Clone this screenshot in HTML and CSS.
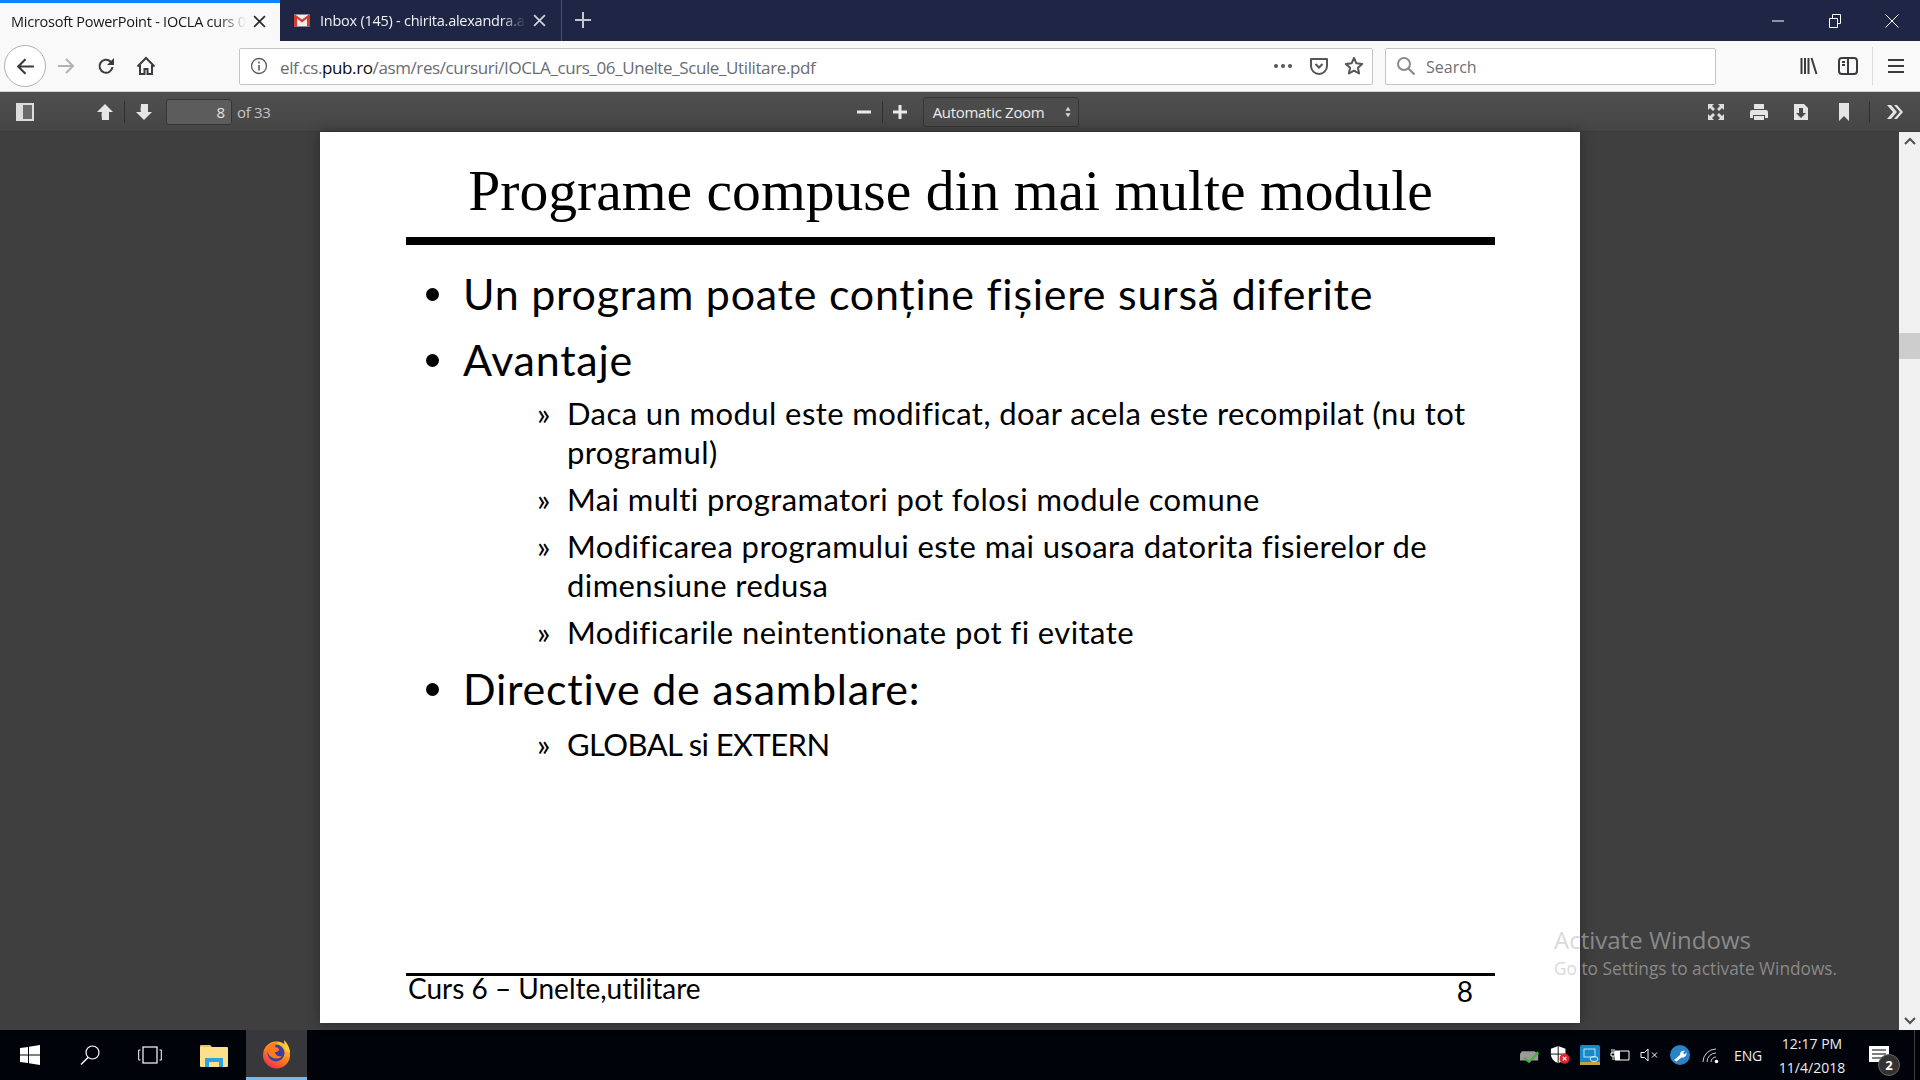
FILE: index.html
```html
<!DOCTYPE html>
<html lang="en">
<head>
    <meta charset="UTF-8">
    <title>IOCLA curs 06</title>
    <link rel="stylesheet" href="styles.css">
</head>
<body>
    <div class="tabbar">
        <div class="tab tab-active">
            <span class="tab-title">Microsoft PowerPoint - IOCLA curs 0</span>
            <svg class="tab-close" viewBox="0 0 12 12"><path d="M1 1l10 10M11 1L1 11" stroke="#2b2b2b" stroke-width="1.6"/></svg>
        </div>
        <div class="tab tab-other">
            <svg class="gmail" viewBox="0 0 16 12"><rect width="16" height="12" rx="1" fill="#eeeeee"/><path d="M0 1v11h3V4l5 4 5-4v8h3V1l-1-1-7 5-7-5z" fill="#d8392e"/></svg>
            <span class="tab-title">Inbox (145) - chirita.alexandra.a</span>
            <svg class="tab-close" viewBox="0 0 12 12"><path d="M1 1l10 10M11 1L1 11" stroke="#d0d3da" stroke-width="1.6"/></svg>
        </div>
        <svg class="new-tab" viewBox="0 0 18 18"><path d="M9 1v16M1 9h16" stroke="#c5c8d0" stroke-width="2"/></svg>
        <div class="window-btns">
            <svg viewBox="0 0 14 14"><path d="M1 7h12" stroke="#fff"/></svg>
            <svg viewBox="0 0 14 14"><path d="M1.500 4.500h8v9h-8zM4.500 4V.5h8v9H10" fill="none" stroke="#fff"/></svg>
            <svg viewBox="0 0 14 14"><path d="M.5.5l13 13M13.500.5l-13 13" stroke="#fff"/></svg>
        </div>
    </div>

    <div class="navbar">
        <div class="back-btn">
            <svg viewBox="0 0 20 20"><path d="M18 10H3M10 3l-7 7 7 7" fill="none" stroke="#3b3b3f" stroke-width="2"/></svg>
        </div>
        <svg class="nav-icon forward" viewBox="0 0 20 20"><path d="M2 10h15M10 3l7 7-7 7" fill="none" stroke="#b3b3b5" stroke-width="2"/></svg>
        <svg class="nav-icon" viewBox="0 0 20 20"><path d="M16.500 11a6.500 6.500 0 1 1-2-5.500L17 8" fill="none" stroke="#3b3b3f" stroke-width="2"/><path d="M18 2v7h-7z" fill="#3b3b3f"/></svg>
        <svg class="nav-icon" viewBox="0 0 20 20"><path d="M1.500 10.500L10 2l8.500 8.500M4 9v9h4.500v-5h3v5H16V9" fill="none" stroke="#3b3b3f" stroke-width="2"/></svg>
        <div class="urlbar">
            <svg class="info" viewBox="0 0 18 18"><circle cx="9" cy="9" r="7.500" fill="none" stroke="#5c5c60" stroke-width="1.300"/><path d="M9 8v5.500M9 4.500v2" stroke="#5c5c60" stroke-width="1.600"/></svg>
            <span class="url">elf.cs.<b>pub.ro</b>/asm/res/cursuri/IOCLA_curs_06_Unelte_Scule_Utilitare.pdf</span>
            <svg class="dots" viewBox="0 0 20 6"><circle cx="3" cy="3" r="2" fill="#55555a"/><circle cx="10" cy="3" r="2" fill="#55555a"/><circle cx="17" cy="3" r="2" fill="#55555a"/></svg>
            <svg class="url-icon" viewBox="0 0 20 20"><path d="M2 3h16v7a8 8 0 0 1-16 0z" fill="none" stroke="#55555a" stroke-width="2" stroke-linejoin="round"/><path d="M6.500 8l3.500 3.500L13.500 8" fill="none" stroke="#55555a" stroke-width="2"/></svg>
            <svg class="url-icon" viewBox="0 0 20 20"><path d="M10 2l2.400 5.300 5.800.6-4.300 3.900 1.200 5.700-5.100-2.900-5.100 2.900 1.200-5.700L1.800 7.900l5.800-.6z" fill="none" stroke="#55555a" stroke-width="2" stroke-linejoin="round"/></svg>
        </div>
        <div class="searchbar">
            <svg class="search-icon" viewBox="0 0 20 20"><circle cx="8" cy="8" r="6" fill="none" stroke="#8a8a8e" stroke-width="2"/><path d="M12.500 12.500l6 6" stroke="#8a8a8e" stroke-width="2.200"/></svg>
            <span class="search-text">Search</span>
        </div>
        <svg class="nav-icon library" viewBox="0 0 20 20"><path d="M2.500 2v16M6 2v16M9.500 2v16M12.500 2l5 16" fill="none" stroke="#3b3b3f" stroke-width="2"/></svg>
        <svg class="nav-icon sidebars" viewBox="0 0 20 20"><rect x="1" y="2" width="18" height="16" rx="3" fill="none" stroke="#3b3b3f" stroke-width="2"/><path d="M10 2v16" stroke="#3b3b3f" stroke-width="2"/><path d="M4 6h3M4 9h3" stroke="#3b3b3f" stroke-width="2"/></svg>
        <span class="nav-sep"></span>
        <svg class="nav-icon" viewBox="0 0 20 20"><path d="M2 4h16M2 10h16M2 16h16" stroke="#3b3b3f" stroke-width="2.200"/></svg>
    </div>

    <div class="pdf-toolbar">
        <svg class="tool tool-side" viewBox="0 0 18 18"><rect x="1" y="1" width="16" height="16" fill="#6a6a6a" stroke="#dcdcdc" stroke-width="2"/><rect x="2" y="2" width="5" height="14" fill="#dcdcdc"/></svg>
        <svg class="tool tool-up" viewBox="0 0 18 18"><path d="M9 1l8 8h-4v8H6c0-3-1-6 0-8H1z" fill="#e6e6e6"/></svg>
        <span class="tool-sep"></span>
        <svg class="tool tool-down" viewBox="0 0 18 18"><path d="M9 17l8-8h-4V1H6c0 3-1 6 0 8H1z" fill="#e6e6e6"/></svg>
        <div class="page-input">8</div>
        <span class="page-count">of 33</span>
        <svg class="tool tool-minus" viewBox="0 0 14 14"><path d="M0 7h14" stroke="#eaeaea" stroke-width="3"/></svg>
        <span class="tool-sep"></span>
        <svg class="tool tool-plus" viewBox="0 0 14 14"><path d="M0 7h14M7 0v14" stroke="#eaeaea" stroke-width="3"/></svg>
        <div class="zoom-select">
            <span>Automatic Zoom</span>
            <svg viewBox="0 0 8 14"><path d="M4 1l3 4.500H1zM4 13L1 8.500h6z" fill="#d8d8d8"/></svg>
        </div>
        <svg class="tool tool-full" viewBox="0 0 18 18"><path d="M1 1h6L5 3l3 3-2 2-3-3-2 2zM17 1v6l-2-2-3 3-2-2 3-3-2-2zM1 17v-6l2 2 3-3 2 2-3 3 2 2zM17 17h-6l2-2-3-3 2-2 3 3 2-2z" fill="#dedede"/></svg>
        <svg class="tool tool-print" viewBox="0 0 20 18"><path d="M5 1h10v5H5zM1 9a2 2 0 0 1 2-2h14a2 2 0 0 1 2 2v6h-3v-3H4v3H1zM5 13h10v4H5z" fill="#e4e4e4"/></svg>
        <svg class="tool tool-save" viewBox="0 0 16 18"><path d="M1 1h10l4 4v12H1z" fill="#e4e4e4"/><path d="M6 5h4v5h3l-5 5-5-5h3z" fill="#4a4a4a"/></svg>
        <svg class="tool tool-mark" viewBox="0 0 12 18"><path d="M1 0h10v18l-5-5-5 5z" fill="#e4e4e4"/></svg>
        <span class="tool-sep"></span>
        <svg class="tool tool-more" viewBox="0 0 18 16"><path d="M1 1h4l6 7-6 7H1l6-7zM8 1h3l6 7-6 7H8l6-7z" fill="#e4e4e4"/></svg>
    </div>

    <div class="viewer">
        <div class="viewer-main">
            <div class="slide">
                <h1>Programe compuse din mai multe module</h1>
                <hr class="slide-rule">
                <ul class="level-1">
                    <li>Un program poate conține fișiere sursă diferite</li>
                    <li>Avantaje
                        <ul class="level-2">
                            <li>Daca un modul este modificat, doar acela este recompilat (nu tot programul)</li>
                            <li>Mai multi programatori pot folosi module comune</li>
                            <li>Modificarea programului este mai usoara datorita fisierelor de dimensiune redusa</li>
                            <li>Modificarile neintentionate pot fi evitate</li>
                        </ul>
                    </li>
                    <li>Directive de asamblare:
                        <ul class="level-2">
                            <li class="caps-line">GLOBAL si EXTERN</li>
                        </ul>
                    </li>
                </ul>
                <div class="slide-footer">
                    <span>Curs 6 – Unelte,utilitare</span>
                    <span class="slide-num">8</span>
                </div>
            </div>
            <div class="activate">
                <div class="activate-title">Activate Windows</div>
                <div class="activate-sub">Go to Settings to activate Windows.</div>
            </div>
        </div>
        <div class="scrollbar">
            <svg viewBox="0 0 12 8"><path d="M1 7l5-5 5 5" fill="none" stroke="#505050" stroke-width="2"/></svg>
            <div class="scroll-track"><div class="scroll-thumb"></div></div>
            <svg viewBox="0 0 12 8"><path d="M1 1l5 5 5-5" fill="none" stroke="#505050" stroke-width="2"/></svg>
        </div>
    </div>

    <div class="taskbar">
        <svg class="task-win" viewBox="0 0 20 20"><path d="M0 3l8-1.100V9.500H0zM9 1.700L20 0v9.500H9zM0 10.500h8v7.600L0 17zM9 10.500h11V20L9 18.300z" fill="#fff"/></svg>
        <svg class="task-search" viewBox="0 0 20 20"><circle cx="12.500" cy="7.500" r="6.500" fill="none" stroke="#fff" stroke-width="1.200"/><path d="M8 12.500L1 19.500" stroke="#fff" stroke-width="1.400"/></svg>
        <svg class="task-view" viewBox="0 0 24 18"><rect x="5" y="1" width="14" height="16" fill="none" stroke="#fff" stroke-width="1.200"/><path d="M2.500 4H.7v10h1.800M21.500 4h1.800v10h-1.800" fill="none" stroke="#fff"/></svg>
        <svg class="task-folder" viewBox="0 0 28 23"><path d="M0 2a1 1 0 0 1 1-1h9l2 2v3H0z" fill="#e9c46a"/><rect x="0" y="3" width="28" height="20" rx="1" fill="#fde08a"/><path d="M5 23v-9h18v9h-4v-5H9v5z" fill="#2aa5e0"/></svg>
        <div class="task-firefox">
            <svg viewBox="0 0 30 30">
                <defs>
                    <linearGradient id="foxGrad" x1="0.800" y1="0" x2="0.200" y2="1">
                        <stop offset="0" stop-color="#ffd43a"/>
                        <stop offset="0.450" stop-color="#ff8a1f"/>
                        <stop offset="1" stop-color="#e8264d"/>
                    </linearGradient>
                </defs>
                <circle cx="14.500" cy="16" r="13.500" fill="url(#foxGrad)"/>
                <path d="M22 1c3 3 6 8 6 13l-5-3z" fill="#ffcf30"/>
                <circle cx="14" cy="14" r="8.500" fill="#3a3fa8"/>
                <path d="M7 6c2-2 7-3 9-2-2 1-3 2-3 4 2 0 4 1 4 3-1 2-3 2-4 2 0 3 3 5 7 4-3 4-10 3-13-1-2-3-2-7 0-10z" fill="#ff7a1c"/>
            </svg>
        </div>
        <div class="tray">
            <svg class="tray-icon" viewBox="0 0 22 18"><path d="M2 5h14l4 3v7H0V8z" fill="#9a9a9a"/><path d="M6 11l4 4 9-10 2 2-11 11-6-5z" fill="#47b13f"/></svg>
            <svg class="tray-icon" viewBox="0 0 22 20"><path d="M9 0l8 3v6c0 5-4 9-8 10-4-1-8-5-8-10V3z" fill="#fff"/><path d="M9 0v19M1 9h16" stroke="#000" stroke-width="1"/><circle cx="16" cy="14" r="5.500" fill="#e0262d"/><path d="M14 12l4 4M18 12l-4 4" stroke="#fff" stroke-width="1.300"/></svg>
            <svg class="tray-icon" viewBox="0 0 20 20"><rect width="20" height="20" rx="2" fill="#1689cc"/><rect x="4" y="4" width="11" height="8" fill="none" stroke="#bfe3f5"/><ellipse cx="14" cy="14" rx="4" ry="2.500" fill="none" stroke="#d5eef9"/><path d="M0 17h20v3H0z" fill="#c7a23a"/></svg>
            <svg class="tray-icon" viewBox="0 0 20 14"><path d="M5 3h14v9H5z" fill="none" stroke="#fff"/><rect x="5" y="3" width="5" height="9" fill="#fff"/><path d="M2 1v4M4 1v4M1 5h4v3H1zM3 8v4" stroke="#fff" fill="none"/></svg>
            <svg class="tray-icon" viewBox="0 0 20 16"><path d="M1 5.500h3.500L8 2v12l-3.500-3.500H1z" fill="none" stroke="#fff"/><path d="M12 5.500l5 5M17 5.500l-5 5" stroke="#fff"/></svg>
            <svg class="tray-icon" viewBox="0 0 20 20"><circle cx="10" cy="10" r="10" fill="#2a83c6"/><path d="M4 15l6-5c0-3 2-5 5-4l-2 2 1.500 1.500 2-2c.5 3-2 5.500-5 5l-5 4z" fill="#fff"/></svg>
            <svg class="tray-icon tray-wifi" viewBox="0 0 20 18"><path d="M1 16A13 13 0 0 1 14 3M5 16A9 9 0 0 1 14 7M9 16a5 5 0 0 1 5-5" fill="none" stroke="#cfcfcf"/><circle cx="14.500" cy="15.500" r="1.800" fill="#fff"/></svg>
            <span class="tray-lang">ENG</span>
            <div class="tray-clock">
                <span>12:17 PM</span>
                <span>11/4/2018</span>
            </div>
            <div class="tray-notify">
                <svg viewBox="0 0 20 18"><path d="M0 0h20v16H0z" fill="#fff"/><path d="M3 4h14M3 8h14M3 12h14" stroke="#000"/></svg>
                <span class="notify-badge">2</span>
            </div>
            <span class="tray-end"></span>
        </div>
    </div>
</body>
</html>
```

FILE: styles.css
```css
html,
body {
    margin: 0;
    height: 100%;
    overflow: hidden;
}

body {
    display: flex;
    flex-direction: column;
    width: 1920px;
    height: 1080px;
    font-family: "Open Sans", "Liberation Sans", sans-serif;
    background: #3f3f3f;
}

svg {
    display: block;
    flex: none;
}

/* Tabs */

.tabbar {
    display: flex;
    align-items: stretch;
    height: 41px;
    background: #1f2544;
    flex: none;
}

.tab {
    display: flex;
    align-items: center;
    box-sizing: border-box;
    font-size: 14.500px;
    letter-spacing: -0.25px;
    white-space: nowrap;
}

.tab-active {
    width: 280px;
    padding: 0 14px 2px 11px;
    background: #f9f9fa;
    border-top: 3px solid #0a84ff;
    color: #17171a;
}

.tab-other {
    width: 282px;
    padding: 0 15px 0 14px;
    border-right: 1px solid #4a5070;
    color: #f0f1f5;
}

.tab-title {
    flex: 1;
    -webkit-mask-image: linear-gradient(to right, #000 88%, transparent);
    mask-image: linear-gradient(to right, #000 88%, transparent);
}

.tab-close {
    width: 13px;
    height: 13px;
    margin-left: 7px;
}

.gmail {
    width: 16px;
    height: 13px;
    margin-right: 10px;
}

.new-tab {
    width: 18px;
    height: 18px;
    margin: 11px 0 0 12px;
}

.window-btns {
    display: flex;
    gap: 43px;
    margin-left: auto;
    padding: 14px 21px 0 0;
}

.window-btns svg {
    width: 14px;
    height: 14px;
}

/* Browser nav bar */

.navbar {
    display: flex;
    align-items: center;
    height: 51px;
    background: #f9f9fa;
    border-bottom: 1px solid #d5d5d7;
    box-sizing: border-box;
    flex: none;
}

.back-btn {
    display: flex;
    align-items: center;
    justify-content: center;
    box-sizing: border-box;
    width: 42px;
    height: 42px;
    margin-left: 4px;
    border: 1px solid #b1b1b3;
    border-radius: 50%;
    background: #fff;
}

.back-btn svg {
    width: 21px;
    height: 21px;
}

.nav-icon {
    width: 20px;
    height: 20px;
}

.forward {
    margin: 0 0 0 10px;
}

.forward + .nav-icon {
    margin-left: 20px;
}

.forward + .nav-icon + .nav-icon {
    margin-left: 20px;
}

.urlbar {
    display: flex;
    align-items: center;
    box-sizing: border-box;
    width: 1134px;
    height: 37px;
    margin-left: 83px;
    background: #fff;
    border: 1px solid #c5c5c7;
    border-radius: 2px;
    padding: 0 8px 0 10px;
}

.info {
    width: 18px;
    height: 18px;
    margin-right: 12px;
}

.url {
    flex: 1;
    padding-top: 2px;
    font-size: 17px;
    letter-spacing: -0.39px;
    color: #6b6b70;
    white-space: nowrap;
}

.url b {
    font-weight: 400;
    color: #0c0c0d;
}

.dots {
    width: 20px;
    height: 6px;
    margin-right: 16px;
}

.url-icon {
    width: 20px;
    height: 20px;
    margin-left: 15px;
}

.dots + .url-icon {
    margin-left: 0;
}

.searchbar {
    display: flex;
    align-items: center;
    box-sizing: border-box;
    width: 331px;
    height: 37px;
    margin-left: 12px;
    background: #fff;
    border: 1px solid #c5c5c7;
    border-radius: 2px;
    padding: 0 0 0 10px;
    font-size: 16px;
    color: #6f6f74;
}

.search-text {
    padding-top: 2px;
}

.search-icon {
    width: 20px;
    height: 20px;
    margin-right: 10px;
}

.library {
    margin-left: 83px;
}

.sidebars {
    margin-left: 19px;
}

.nav-sep {
    width: 1px;
    height: 38px;
    margin: 0 13px 0 14px;
    background: #dcdcde;
}

/* pdf.js toolbar */

.pdf-toolbar {
    display: flex;
    align-items: center;
    height: 40px;
    background: linear-gradient(#4f4f4f, #454545);
    box-shadow: inset 0 -1px 0 #3a3a3a;
    flex: none;
}

.tool {
    width: 18px;
    height: 18px;
}

.tool-side {
    margin-left: 16px;
}

.tool-up {
    margin-left: 62px;
}

.tool-sep {
    width: 1px;
    height: 22px;
    background: #2f2f2f;
}

.tool-up + .tool-sep {
    margin-left: 10px;
}

.tool-down {
    margin-left: 10px;
}

.page-input {
    box-sizing: border-box;
    width: 66px;
    height: 26px;
    margin-left: 13px;
    padding-right: 6px;
    background: #5c5c5c;
    border: 1px solid #363636;
    border-radius: 3px;
    text-align: right;
    font-size: 15px;
    line-height: 24px;
    color: #e4e4e4;
}

.page-count {
    margin-left: 5px;
    font-size: 15px;
    letter-spacing: -0.3px;
    color: #c4c4c4;
}

.tool-minus {
    width: 14px;
    height: 14px;
    margin-left: 586px;
}

.tool-minus + .tool-sep {
    margin-left: 11px;
}

.tool-plus {
    width: 14px;
    height: 14px;
    margin-left: 10px;
}

.zoom-select {
    display: flex;
    align-items: center;
    justify-content: space-between;
    box-sizing: border-box;
    width: 156px;
    height: 30px;
    margin-left: 16px;
    padding: 0 6px 0 9px;
    background: #4b4b4b;
    border: 1px solid #363636;
    border-radius: 3px;
    font-size: 15px;
    letter-spacing: -0.3px;
    color: #ececec;
}

.zoom-select svg {
    width: 8px;
    height: 12px;
}

.tool-full {
    margin-left: 628px;
}

.tool-print {
    width: 20px;
    margin-left: 24px;
}

.tool-save {
    width: 16px;
    margin-left: 24px;
}

.tool-mark {
    width: 12px;
    margin-left: 29px;
}

.tool-mark + .tool-sep {
    margin-left: 19px;
}

.tool-more {
    margin-left: 16px;
}

/* Viewer */

.viewer {
    display: flex;
    flex: 1;
    min-height: 0;
    background: #3f3f3f;
}

.viewer-main {
    position: relative;
    flex: 1;
    padding-left: 320px;
}

.slide {
    display: flex;
    flex-direction: column;
    box-sizing: border-box;
    width: 1260px;
    height: 891px;
    padding: 0 85px 0 86px;
    background: #fff;
    box-shadow: 0 0 12px rgba(0, 0, 0, 0.35);
    color: #000;
}

.slide h1 {
    margin: 21px 0 0;
    font: 400 57.600px/76px "Liberation Serif", serif;
    text-align: center;
    white-space: nowrap;
}

.slide-rule {
    height: 8px;
    margin: 8px 0 0;
    border: 0;
    background: #000;
}

.level-1 {
    flex: 1;
    margin: 0;
    padding: 20px 0 0 57px;
    list-style: none;
    font: 400 43px/58px Lato, "Open Sans", sans-serif;
    letter-spacing: 0.75px;
    font-variant-ligatures: none;
}

.level-1 > li {
    position: relative;
    margin-bottom: 8px;
}

.level-1 > li::before {
    content: "";
    position: absolute;
    left: -37px;
    top: 23px;
    width: 13px;
    height: 13px;
    border-radius: 50%;
    background: #000;
}

.level-2 {
    margin: 5px 0 0;
    padding: 0 0 0 104px;
    list-style: none;
    font-size: 31px;
    line-height: 39px;
    letter-spacing: 0.42px;
}

.level-2 > li {
    position: relative;
    margin-bottom: 8px;
}

.level-2 > li::before {
    content: "»";
    position: absolute;
    left: -30px;
}

.level-2 > .caps-line {
    top: 2px;
    letter-spacing: -0.6px;
}

.slide-footer {
    display: flex;
    justify-content: space-between;
    height: 47px;
    padding: 0 22px 0 2px;
    border-top: 3px solid #000;
    font: 400 28px/24px Lato, "Open Sans", sans-serif;
    font-variant-ligatures: none;
}

.slide-num {
    padding-top: 3px;
}

.activate {
    position: absolute;
    left: 1554px;
    top: 791px;
    color: rgba(190, 190, 190, 0.6);
    white-space: nowrap;
}

.activate-title {
    font-size: 24px;
    line-height: 34px;
}

.activate-sub {
    font-size: 17.300px;
    line-height: 24px;
}

.scrollbar {
    display: flex;
    flex-direction: column;
    align-items: center;
    width: 21px;
    padding: 5px 0;
    box-sizing: border-box;
    background: #f0f0f0;
}

.scrollbar svg {
    width: 12px;
    height: 8px;
}

.scroll-track {
    flex: 1;
    align-self: stretch;
    padding-top: 188px;
}

.scroll-thumb {
    height: 26px;
    background: #cdcdcd;
}

/* Windows taskbar */

.taskbar {
    display: flex;
    align-items: center;
    height: 50px;
    background: #01030a;
    flex: none;
}

.task-win {
    width: 20px;
    height: 20px;
    margin-left: 20px;
}

.task-search {
    width: 20px;
    height: 20px;
    margin-left: 40px;
}

.task-view {
    width: 24px;
    height: 18px;
    margin-left: 38px;
}

.task-folder {
    width: 28px;
    height: 23px;
    margin-left: 38px;
}

.task-firefox {
    display: flex;
    align-items: center;
    justify-content: center;
    box-sizing: border-box;
    width: 61px;
    height: 50px;
    margin-left: 18px;
    background: #37383c;
    border-bottom: 3px solid #76b9ed;
}

.task-firefox svg {
    width: 30px;
    height: 30px;
}

.tray {
    display: flex;
    align-items: center;
    margin-left: auto;
    height: 100%;
    color: #eee;
}

.tray-icon {
    width: 20px;
    height: 20px;
    margin-right: 10px;
}

.tray-wifi {
    margin-left: 2px;
}

.tray-lang {
    margin: 0 0 0 2px;
    font-size: 14px;
    letter-spacing: -0.2px;
}

.tray-clock {
    display: flex;
    flex-direction: column;
    align-items: center;
    width: 70px;
    margin-left: 15px;
    padding-top: 2px;
    font-size: 14px;
    line-height: 24px;
}

.tray-notify {
    position: relative;
    margin-left: 22px;
}

.tray-notify svg {
    width: 20px;
    height: 18px;
}

.notify-badge {
    position: absolute;
    left: 9px;
    top: 8px;
    width: 20px;
    height: 20px;
    border-radius: 50%;
    background: #333;
    border: 1px solid #666;
    font-size: 13px;
    font-weight: 700;
    line-height: 20px;
    text-align: center;
    color: #fff;
}

.tray-end {
    width: 1px;
    height: 100%;
    margin-left: 25px;
    margin-right: 5px;
    background: #3a3a3a;
}
```
